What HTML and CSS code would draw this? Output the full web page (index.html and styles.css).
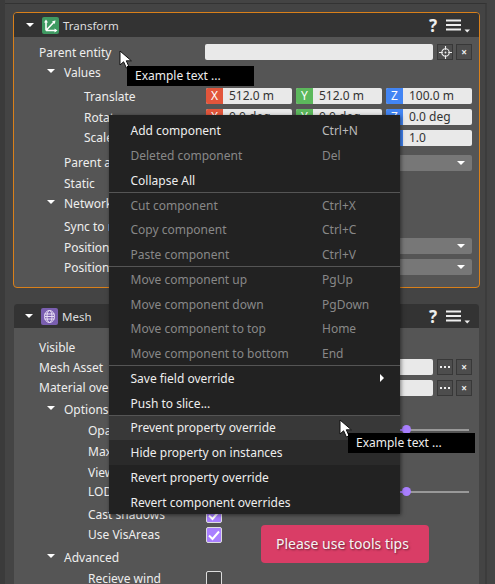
FILE: index.html
```html
<!DOCTYPE html>
<html lang="en">
<head>
<meta charset="utf-8">
<title>Entity inspector</title>
<link rel="stylesheet" href="styles.css">
</head>
<body>
<main class="inspector">
  <section class="card card-active">
    <header class="card-head">
      <span class="caret"></span>
      <svg class="comp-icon" viewBox="0 0 17 17"><rect width="17" height="17" rx="2" fill="#3f9a62"/><path d="M4 13.5V4M4 13.5H14M4 13.5L12 5" fill="none" stroke="#fff" stroke-width="1.6"/><path d="M4 2.5L6 5.5H2ZM15.5 13.5L12.5 15.5V11.5ZM13.5 3.5L12.8 7L10 4.2Z" fill="#fff"/></svg>
      <span class="card-title">Transform</span>
      <span class="help">?</span>
      <svg class="menu-icon" viewBox="0 0 24 14"><path d="M0 1.5H15M0 6H15M0 10.5H15" stroke="#eee" stroke-width="2"/><path d="M18.5 10.5H24L21.2 13.5Z" fill="#eee"/></svg>
    </header>
    <div class="card-body pad-t">
      <div class="row"><span class="label l1">Parent entity</span><div class="fields"><div class="input grow"></div><button class="mini"><svg viewBox="0 0 14 14" class="target"><circle cx="7" cy="7" r="4" fill="none" stroke="#eee" stroke-width="1.2"/><circle cx="7" cy="7" r="1" fill="#eee"/><path d="M7 0V4M7 10V14M0 7H4M10 7H14" stroke="#eee" stroke-width="1.2"/></svg></button><button class="mini x">×</button></div></div>
      <div class="row"><span class="tri"></span><span class="label l2">Values</span></div>
      <div class="row m4"><span class="label l3">Translate</span><div class="fields vec"><div class="num"><b class="tx">X</b><span>512.0 m</span></div><div class="num"><b class="ty">Y</b><span>512.0 m</span></div><div class="num"><b class="tz">Z</b><span>100.0 m</span></div></div></div>
      <div class="row m1"><span class="label l3">Rotate</span><div class="fields vec"><div class="num"><b class="tx">X</b><span>0.0 deg</span></div><div class="num"><b class="ty">Y</b><span>0.0 deg</span></div><div class="num"><b class="tz">Z</b><span>0.0 deg</span></div></div></div>
      <div class="row"><span class="label l3">Scale</span><div class="fields vec low"><div class="num"><b class="tx">X</b><span>1.0</span></div><div class="num"><b class="ty">Y</b><span>1.0</span></div><div class="num"><b class="tz">Z</b><span>1.0</span></div></div></div>
      <div class="row m5"><span class="label l2">Parent activation</span><div class="fields low"><div class="select"></div></div></div>
      <div class="row m1"><span class="label l2">Static</span></div>
      <div class="row"><span class="tri"></span><span class="label l2">Network</span></div>
      <div class="row m3"><span class="label l2">Sync to replicas</span></div>
      <div class="row m1"><span class="label l2">Position interpolation</span><div class="fields high"><div class="select"></div></div></div>
      <div class="row"><span class="label l2">Position sync</span><div class="fields"><div class="select"></div></div></div>
    </div>
  </section>

  <section class="card card-mesh">
    <header class="card-head">
      <span class="caret"></span>
      <svg class="comp-icon" viewBox="0 0 17 17"><rect width="17" height="17" rx="2" fill="#7a5fb0"/><g fill="none" stroke="#e8dff5" stroke-width="1"><ellipse cx="8.5" cy="8.5" rx="5" ry="6"/><ellipse cx="8.5" cy="8.5" rx="2.5" ry="6"/><path d="M3.5 6H13.5M3.5 11H13.5M4 8.5H13"/></g></svg>
      <span class="card-title">Mesh</span>
      <span class="help">?</span>
      <svg class="menu-icon" viewBox="0 0 24 14"><path d="M0 1.5H15M0 6H15M0 10.5H15" stroke="#eee" stroke-width="2"/><path d="M18.5 10.5H24L21.2 13.5Z" fill="#eee"/></svg>
    </header>
    <div class="card-body pad-m">
      <div class="row"><span class="label l1">Visible</span></div>
      <div class="row"><span class="label l1">Mesh Asset</span><div class="fields"><div class="input grow"></div><button class="mini"><svg class="dots" viewBox="0 0 10 2"><path d="M0 0h2v2H0zM4 0h2v2H4zM8 0h2v2H8z" fill="#eee"/></svg></button><button class="mini x">×</button></div></div>
      <div class="row"><span class="label l1">Material override</span><div class="fields low"><div class="input grow"></div><button class="mini"><svg class="dots" viewBox="0 0 10 2"><path d="M0 0h2v2H0zM4 0h2v2H4zM8 0h2v2H8z" fill="#eee"/></svg></button><button class="mini x">×</button></div></div>
      <div class="row m2"><span class="tri"></span><span class="label l2">Options</span></div>
      <div class="row m1"><span class="label l3b">Opacity</span><div class="fields"><div class="slider"><span class="fill"></span><span class="thumb"></span></div></div></div>
      <div class="row m1"><span class="label l3b">Max view distance</span></div>
      <div class="row m1"><span class="label l3b">View diffuse</span></div>
      <div class="row n1"><span class="label l3b">LOD multiplier</span><div class="fields low"><div class="slider"><span class="fill"></span><span class="thumb"></span></div></div></div>
      <div class="row m3"><span class="label l3b">Cast shadows</span><div class="fields low"><span class="check on"><svg viewBox="0 0 14 14"><path d="M2 7.5L5.5 11L12 3.5" fill="none" stroke="#fff" stroke-width="2"/></svg></span></div></div>
      <div class="row"><span class="label l3b">Use VisAreas</span><div class="fields low"><span class="check on"><svg viewBox="0 0 14 14"><path d="M2 7.5L5.5 11L12 3.5" fill="none" stroke="#fff" stroke-width="2"/></svg></span></div></div>
      <div class="row m3"><span class="tri"></span><span class="label l2">Advanced</span></div>
      <div class="row m1"><span class="label l3b">Recieve wind</span><div class="fields low"><span class="check"></span></div></div>
    </div>
  </section>
</main>

<nav class="context">
  <ul class="group">
    <li><span>Add component</span><kbd>Ctrl+N</kbd></li>
    <li class="off"><span>Deleted component</span><kbd>Del</kbd></li>
    <li><span>Collapse All</span></li>
  </ul>
  <ul class="group">
    <li class="off"><span>Cut component</span><kbd>Ctrl+X</kbd></li>
    <li class="off"><span>Copy component</span><kbd>Ctrl+C</kbd></li>
    <li class="off"><span>Paste component</span><kbd>Ctrl+V</kbd></li>
  </ul>
  <ul class="group">
    <li class="off"><span>Move component up</span><kbd>PgUp</kbd></li>
    <li class="off"><span>Move component down</span><kbd>PgDown</kbd></li>
    <li class="off"><span>Move component to top</span><kbd>Home</kbd></li>
    <li class="off"><span>Move component to bottom</span><kbd>End</kbd></li>
  </ul>
  <ul class="group">
    <li><span>Save field override</span><i class="sub"></i></li>
    <li><span>Push to slice...</span></li>
  </ul>
  <ul class="group">
    <li class="hover"><span>Prevent property override</span></li>
    <li class="hover-soft"><span>Hide property on instances</span></li>
  </ul>
  <ul class="group">
    <li><span>Revert property override</span></li>
    <li><span>Revert component overrides</span></li>
  </ul>
</nav>

<svg class="cursor cursor-a" viewBox="0 0 14 19"><path d="M1 1V15L4.6 11.8L7.4 18L10 16.8L7.3 10.8H12.4Z" fill="#fff" stroke="#111" stroke-width="1"/></svg>
<svg class="cursor cursor-b" viewBox="0 0 14 19"><path d="M1 1V15L4.6 11.8L7.4 18L10 16.8L7.3 10.8H12.4Z" fill="#fff" stroke="#111" stroke-width="1"/></svg>
<div class="tip tip-a">Example text ...</div>
<div class="tip tip-b">Example text ...</div>
<div class="toast">Please use tools tips</div>
</body>
</html>
```
FILE: styles.css
```css
* { box-sizing: border-box; }
html, body { margin: 0; height: 100%; }
body {
  position: relative;
  width: 495px;
  height: 584px;
  overflow: hidden;
  background: #444;
  font-family: "Noto Sans", sans-serif;
  font-size: 12px;
  color: #eee;
}
.inspector {
  height: 581px;
  margin: 3px 0 0 5px;
  padding: 8px 14px 0 8px;
  background: #444;
  border-top: 1px solid #333;
  display: flex;
  flex-direction: column;
  gap: 16px;
  width: 482px;
  border-right: 2px solid #3c3c3c;
  position: relative;
}
body::before { content: ""; position: absolute; inset: 0 auto 0 0; width: 5px; background: #3b3b3b; }
.card { width: 467px; flex: none; }
.card-active {
  height: 276px;
  border: 1px solid #d9801a;
  border-radius: 4px;
  overflow: hidden;
  background: #555;
}
.card-mesh { flex: 1; margin: 0 1px; width: 465px; border-radius: 3px 3px 0 0; overflow: hidden; background: #555; }
.card-head {
  height: 24px;
  background: #333;
  display: flex;
  align-items: center;
  padding: 0 9px 0 12px;
}
.card-mesh .card-head { padding: 0 9px 0 11px; }
.caret {
  width: 0; height: 0;
  border-left: 4px solid transparent;
  border-right: 4px solid transparent;
  border-top: 4px solid #fff;
  margin-right: 8px;
}
.comp-icon { width: 17px; height: 17px; margin-right: 4px; flex: none; }
.card-title { font-size: 11.5px; flex: 1; color: #ddd; }
.help { font-weight: 700; font-size: 17px; color: #eee; width: 14px; text-align: center; margin-right: 6px; }
.menu-icon { width: 24px; height: 14px; margin-top: 1px; }
.pad-t { padding-top: 6px; }
.pad-m { padding-top: 10px; }
.row {
  height: 20px;
  display: flex;
  align-items: center;
  position: relative;
}
.m1 { margin-top: 1px; }
.m2 { margin-top: 2px; }
.m3 { margin-top: 3px; }
.m4 { margin-top: 4px; }
.m5 { margin-top: 5px; }
.n1 { margin-top: -1px; }
.label { white-space: nowrap; color: #eee; line-height: 16px; }
.l1 { margin-left: 25px; }
.l2 { margin-left: 50px; }
.l3 { margin-left: 70px; }
.l3b { margin-left: 74px; }
.tri {
  position: absolute;
  left: 33px;
  top: 6px;
  width: 0; height: 0;
  border-left: 4px solid transparent;
  border-right: 4px solid transparent;
  border-top: 4px solid #fff;
}
.fields {
  position: absolute;
  left: 192px;
  top: 1px;
  width: 266px;
  height: 16px;
  display: flex;
  align-items: center;
  gap: 3px;
}
.fields.low { top: 2px; }
.fields.high { top: 0; }
.vec { gap: 4px; }
.input { height: 16px; background: #e9e9e9; border-radius: 2px; margin: 0 1px 0 -1px; }
.grow { flex: 1; }
.mini {
  width: 16px; height: 16px; padding: 0;
  background: #4d4d4d;
  border: 1px solid #383838;
  color: #eee;
  font: 700 10px/14px "Noto Sans", sans-serif;
  display: flex;
  align-items: center;
  justify-content: center;
  flex: none;
}
.dots { width: 10px; height: 2px; }
.target { width: 13px; height: 13px; }
.num {
  flex: 1;
  height: 16px;
  display: flex;
  background: #e9e9e9;
  border-radius: 2px;
  overflow: hidden;
  color: #333;
  line-height: 16px;
}
.num b { width: 17px; font-weight: 400; color: #fff; text-align: center; }
.num span { padding-left: 6px; }
.tx { background: #e2553b; }
.ty { background: #5cb85c; }
.tz { background: #4285f4; }
.select { flex: 1; height: 16px; background: #777; border-radius: 2px; position: relative; }
.select::after {
  content: "";
  position: absolute;
  right: 7px; top: 6px;
  border-left: 4px solid transparent;
  border-right: 4px solid transparent;
  border-top: 4px solid #fff;
}
.slider { width: 263px; height: 2px; background: #999; position: relative; }
.fill { position: absolute; left: 0; top: 0; width: 198px; height: 2px; background: #a97fff; }
.thumb { position: absolute; left: 196px; top: -4px; width: 9px; height: 9px; border-radius: 50%; background: #a97fff; }
.check {
  display: block;
  width: 16px; height: 16px;
  border: 1px solid #ddd;
  border-radius: 2px;
  background: #444;
}
.check svg { display: block; width: 14px; height: 14px; }
.check.on { background: #a97fff; }
.context {
  position: absolute;
  left: 109px;
  top: 115px;
  width: 291px;
  height: 399px;
  background: #222;
  box-shadow: 1px 1px 4px rgba(0, 0, 0, .5);
  padding-top: 3.5px;
}
.group { list-style: none; margin: -1px 0 0; padding: 0; border-top: 1px solid #555; }
.group:first-child { border-top: 0; margin-top: 0; }
.group li {
  height: 24.75px;
  display: flex;
  align-items: center;
  padding-left: 21.5px;
  position: relative;
  color: #eee;
}
.group li.off { color: #888; }
.group li.hover { background: #383838; }
.group li.hover-soft { background: #2a2a2a; }
kbd { position: absolute; left: 213px; font: inherit; color: #bbb; }
.off kbd { color: #888; }
.sub {
  position: absolute;
  left: 271px; top: 8px;
  border-top: 4px solid transparent;
  border-bottom: 4px solid transparent;
  border-left: 4px solid #fff;
}
.cursor { position: absolute; width: 14px; height: 19px; }
.cursor-a { left: 119px; top: 50px; }
.cursor-b { left: 339px; top: 419px; }
.tip {
  position: absolute;
  width: 127px;
  height: 20px;
  background: #000;
  color: #eee;
  line-height: 20px;
  padding-left: 8px;
}
.tip-a { left: 127px; top: 66px; }
.tip-b { left: 348px; top: 433px; }
.toast {
  position: absolute;
  left: 261px;
  top: 525px;
  width: 168px;
  height: 38px;
  background: #d93d66;
  border-radius: 4px;
  color: #f5f5f5;
  font-size: 14px;
  line-height: 38px;
  padding-left: 15px;
  text-shadow: 1px 1px 2px rgba(0, 0, 0, .5);
}
```
